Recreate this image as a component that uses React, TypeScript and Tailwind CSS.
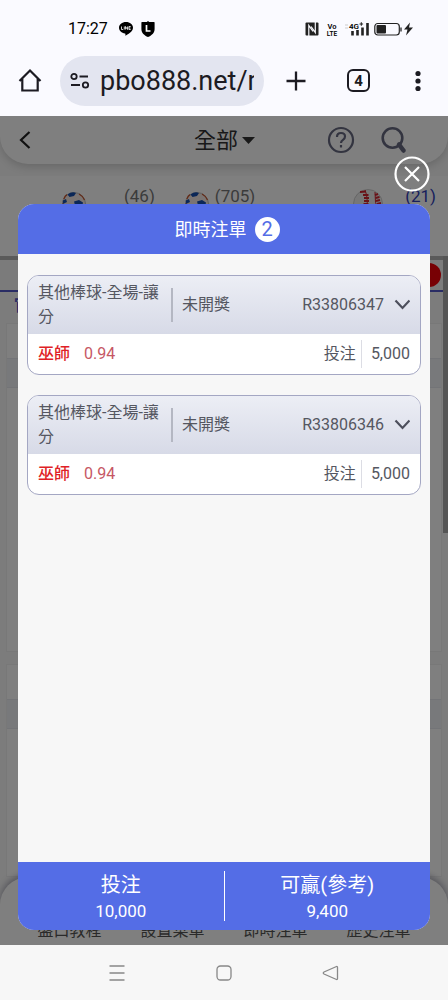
import React from "react";

type Bet = {
  id: string;
  game: string;
  status: string;
  team: string;
  odds: string;
  stake: string;
};

const bets: Bet[] = [
  { id: "R33806347", game: "其他棒球-全場-讓分", status: "未開獎", team: "巫師", odds: "0.94", stake: "5,000" },
  { id: "R33806346", game: "其他棒球-全場-讓分", status: "未開獎", team: "巫師", odds: "0.94", stake: "5,000" },
];

const tabs = ["盤口教程", "設置菜單", "即時注單", "歷史注單"];

const StatusBar: React.FC = () => (
  <div className="flex h-14 items-center justify-between pt-0.5 pl-17 pr-[34px] text-black">
    <div className="flex items-center">
      <span className="w-12 text-base leading-5">17:27</span>
      <svg className="ml-0.5 h-4 w-4" viewBox="0 0 16 16">
        <path d="M8 1C4 1 1 3.500 1 6.800c0 3 2.600 5.200 6 5.700.600.200.500.900.300 2.300 2.300-1.300 7.700-4 7.700-8C15 3.500 12 1 8 1z" />
        <path d="M3.500 5.500v3h1.700M6.300 5.500v3M7.500 8.500v-3l2 3v-3M12.700 5.500h-1.800v3h1.800M11 7h1.500" fill="none" stroke="white" strokeWidth="0.8" />
      </svg>
      <svg className="ml-1.5 h-4 w-4" viewBox="0 0 16 16">
        <path d="M8 0l1.200 1H14q.600 0 .600.600V8c0 4-3 6.500-6.600 8-3.600-1.500-6.600-4-6.600-8V1.600q0-.600.600-.600h4.800z" />
        <path d="M6.500 4v6h4" fill="none" stroke="white" strokeWidth="1.700" />
      </svg>
    </div>
    <div className="flex items-center">
      <svg className="h-3.5 w-3.5" viewBox="0 0 14 14">
        <rect x="0.500" y="0.500" width="13" height="13" rx="1" fill="#222" />
        <path d="M3.800 14V3.500l4.200 6M10.300 0v10.500l-4.200-6" fill="none" stroke="#fafaff" strokeWidth="1.200" />
      </svg>
      <svg className="ml-[7px] h-4 w-3" viewBox="0 0 12 16">
        <text x="6" y="7.500" textAnchor="middle" fontSize="7.500" fontWeight="600" fontFamily="Roboto">Vo</text>
        <text x="6" y="14.500" textAnchor="middle" fontSize="6.500" fontWeight="600" fontFamily="Roboto">LTE</text>
      </svg>
      <svg className="ml-1.5 h-4 w-7" viewBox="0 0 28 16">
        <path d="M1 4h3M1 7h3" stroke="#ccc" />
        <text x="5" y="7.500" fontSize="8" fontWeight="600" fontFamily="Roboto">4G</text>
        <path d="M15.500 3h3.600M17.300 1.200v3.600" stroke="#222" strokeWidth="1" />
        <path d="M8.500 14.500V10M13.500 14.500V9M18.500 14.500V6.500M23.500 14.500V2" stroke="#222" strokeWidth="2.600" />
      </svg>
      <svg className="ml-0.5 h-4 w-10" viewBox="0 0 40 16">
        <rect x="0.800" y="2.500" width="24.500" height="11.500" rx="3" fill="none" stroke="#222" strokeWidth="1.200" />
        <rect x="2.500" y="4" width="9.500" height="8.500" rx="1" fill="#222" />
        <path d="M27 6.500v4" stroke="#222" strokeWidth="1.300" />
        <path d="M36 1.500l-6 7h3.500L32 14.500l7-8h-4z" fill="#222" />
      </svg>
    </div>
  </div>
);

const BrowserBar: React.FC = () => (
  <div className="flex h-[60px] items-start px-4 text-[#1c1b22]">
    <button aria-label="Home" className="mt-2.5 mr-4 h-7 w-7">
      <svg viewBox="0 0 28 28" fill="none" stroke="currentColor" strokeWidth="2.200">
        <path d="M3.500 15L14 4.500 24.500 15M6.300 12.500v12h15.400v-12" />
      </svg>
    </button>
    <div className="flex h-[50px] min-w-0 flex-1 items-center rounded-full bg-[#e3e5f0] px-2.5">
      <svg className="h-5 w-5 shrink-0" viewBox="0 0 20 20" fill="none" stroke="currentColor" strokeWidth="1.800">
        <circle cx="4" cy="5.500" r="2.700" />
        <path d="M9.500 5.500h8.500M1 14H10" />
        <circle cx="15.500" cy="14" r="2.700" />
      </svg>
      <input
        aria-label="Address"
        readOnly
        value="pbo888.net/mobile"
        className="ml-2.5 min-w-0 flex-1 bg-transparent text-[27px] leading-8 outline-none"
      />
    </div>
    <button aria-label="New tab" className="mt-[13px] ml-5 h-6 w-6">
      <svg viewBox="0 0 24 24" stroke="currentColor" strokeWidth="2.300">
        <path d="M12 2.500v19M2.500 12h19" />
      </svg>
    </button>
    <button aria-label="Tabs" className="mt-[13px] ml-[39px] h-[23px] w-[23px] rounded-md border-2 border-current text-[15px] leading-4 font-bold">
      4
    </button>
    <button aria-label="More" className="mt-[13px] mr-0.5 ml-9 h-6 w-6">
      <svg viewBox="0 0 24 24" fill="currentColor">
        <circle cx="12" cy="4.500" r="2.600" />
        <circle cx="12" cy="12" r="2.600" />
        <circle cx="12" cy="19.500" r="2.600" />
      </svg>
    </button>
  </div>
);

const SoccerBall: React.FC = () => (
  <svg className="h-6 w-6" viewBox="0 0 24 24">
    <circle cx="12" cy="12" r="11.500" fill="#f5e9e4" stroke="#bbb" />
    <path d="M5.500 2.500Q10-1 14 1L12 4 7.500 5zM12 9.500l5-1.500 4 2.500-1 5-6 1.500zM.800 8.500L4 7l1 3-4 2z" fill="#174fae" />
    <path d="M1.800 7Q3 3.800 5 2.600M17 2q4 2 5.500 6M.600 11.500l1.500 3" fill="none" stroke="#c4552e" strokeWidth="1.300" />
  </svg>
);

const Baseball: React.FC = () => (
  <svg className="h-[30px] w-[30px]" viewBox="0 0 30 30">
    <circle cx="15" cy="15" r="14.500" fill="#eee" stroke="#ccc" />
    <path d="M12 1q4 9 1 26M22 3q-1 10 4 21" fill="none" stroke="#d3222f" strokeWidth="1" />
    <path d="M7 3l6-.500M10 6h5.500M11 9h5M11 12h5M10.500 15h5M22 6l3-1M22.500 9l4-1M23 12l4-1M24 15l4-1" stroke="#d3222f" strokeWidth="1.900" />
  </svg>
);

const OddsBlock: React.FC<{ className: string }> = ({ className }) => (
  <div className={`mx-1.5 border border-[#f0f0f0] bg-white ${className}`}>
    <div className="h-[34px]" />
    <div className="h-[30px] border-y border-[#e6e8ee] bg-[#f0f2f6]" />
  </div>
);

const SportsPage: React.FC = () => (
  <div className="flex h-full flex-col bg-[#f8f8f8] text-[#333]">
    <div className="flex h-12 shrink-0 items-center rounded-b-[28px] bg-white px-3.5 shadow-[0_3px_8px_rgba(0,0,0,0.16)]">
      <button aria-label="Back" className="h-5 w-5">
        <svg viewBox="0 0 20 20" fill="none" stroke="#222" strokeWidth="2.200">
          <path d="M15.500 2L7 10l8.500 8" />
        </svg>
      </button>
      <div className="flex-1" />
      <button className="mr-[71px] flex items-center gap-1 pt-0.5 text-[22px] leading-6">
        全部
        <svg className="h-2 w-3.5" viewBox="0 0 14 8" fill="#333">
          <path d="M0 0h13L6.500 7z" />
        </svg>
      </button>
      <div className="flex items-center gap-6 pr-[27px] text-[#666980]">
        <button aria-label="Help" className="h-7 w-7">
          <svg viewBox="0 0 28 28" fill="none" stroke="currentColor" strokeWidth="2.200">
            <circle cx="14" cy="14" r="12" />
            <path d="M10 11q0-4 4-4t4 3.500q0 2-2 3.300t-2 3.200" />
            <path d="M14 19v2.500" />
          </svg>
        </button>
        <button aria-label="Search" className="h-7 w-7">
          <svg viewBox="0 0 28 28" fill="none" stroke="currentColor" strokeWidth="2.600">
            <circle cx="13.500" cy="12" r="9.800" />
            <path d="M20 18.500l4.500 6" strokeWidth="4.500" strokeLinecap="round" />
          </svg>
        </button>
      </div>
    </div>
    <div className="mt-3 flex h-20 shrink-0 items-start bg-white pt-2.5 pl-[62px] pr-3 text-[17px] leading-5 text-[#777]">
      <div className="mt-1.5"><SoccerBall /></div>
      <span className="ml-[38px]">(46)</span>
      <div className="mt-1.5 ml-[30px]"><SoccerBall /></div>
      <span className="ml-1.5">(705)</span>
      <div className="mt-[3px] ml-auto"><Baseball /></div>
      <span className="ml-[22px] text-[#303cb8]">(21)</span>
    </div>
    <div className="flex h-9 shrink-0 items-center justify-end border-t-4 border-b-2 border-t-[#b5b5b5] border-b-[#5258c8] bg-[#f6f6f6] pr-[7px]">
      <div className="h-6 w-6 rounded-full bg-[#f00008]" />
    </div>
    <div className="h-[31px] shrink-0 pl-3.5 text-base leading-7 font-bold text-[#5258c8]">官</div>
    <OddsBlock className="h-[329px] shrink-0" />
    <OddsBlock className="mt-3 min-h-0 flex-1" />
    <div className="flex h-[68px] shrink-0 items-end justify-around rounded-t-[28px] bg-white px-[18px] pb-0.5 shadow-[0_-3px_6px_rgba(60,60,90,0.4)]">
      {tabs.map((tab) => (
        <button key={tab} className="text-base leading-6 text-[#555]">
          {tab}
        </button>
      ))}
    </div>
  </div>
);

const BetCard: React.FC<{ bet: Bet }> = ({ bet }) => (
  <div className="overflow-hidden rounded-xl border border-[#a4a7c3] bg-white text-base text-[#555761]">
    <div className="flex h-[58px] items-center bg-linear-to-b from-[#eceef5] to-[#d7dae7] px-2.5">
      <div className="w-[133px] leading-6">
        <div className="w-[124px]">{bet.game}</div>
      </div>
      <div className="h-[34px] w-0.5 bg-[#b4b7c2]" />
      <span className="ml-[9px]">{bet.status}</span>
      <span className="ml-auto">{bet.id}</span>
      <button aria-label="Expand" className="ml-2.5 h-4 w-4">
        <svg viewBox="0 0 16 16" fill="none" stroke="#4d4f5c" strokeWidth="2.200">
          <path d="M1.500 3.500l7 7.500 7-7.500" />
        </svg>
      </button>
    </div>
    <div className="flex h-10 items-center px-2.5">
      <span className="font-medium text-[#e01f26]">{bet.team}</span>
      <span className="ml-3.5 text-[#c65764]">{bet.odds}</span>
      <span className="ml-auto">投注</span>
      <div className="mx-[5px] h-7 w-px bg-[#dcdde4]" />
      <span className="ml-1">{bet.stake}</span>
    </div>
  </div>
);

const BetSlip: React.FC = () => (
  <div role="dialog" aria-label="即時注單" className="relative flex h-full flex-col rounded-2xl bg-[#f7f7f7]">
    <button aria-label="Close" className="absolute -top-12 right-0 h-9 w-9 text-white">
      <svg viewBox="0 0 36 36" fill="none" stroke="currentColor" strokeWidth="2.200">
        <circle cx="18" cy="18" r="16.500" />
        <path d="M11 11l14 14M25 11L11 25" />
      </svg>
    </button>
    <div className="flex h-[50px] shrink-0 items-center justify-center gap-2 rounded-t-2xl bg-[#546de6] pl-1.5 text-white">
      <span className="pt-0.5 text-lg">即時注單</span>
      <span className="flex h-[25px] w-[25px] items-center justify-center rounded-full bg-white text-xl text-[#546de6]">
        {bets.length}
      </span>
    </div>
    <div className="flex flex-1 flex-col gap-5 px-[9px] pt-[21px]">
      {bets.map((bet) => (
        <BetCard key={bet.id} bet={bet} />
      ))}
    </div>
    <div className="flex h-[68px] shrink-0 items-center rounded-b-2xl bg-[#546de6] text-center text-white">
      <div className="flex-1 pt-0.5">
        <div className="text-xl leading-7">投注</div>
        <div className="text-[17px] leading-6">10,000</div>
      </div>
      <div className="h-[50px] w-px bg-white" />
      <div className="flex-1 pt-0.5">
        <div className="text-xl leading-7">可贏(參考)</div>
        <div className="text-[17px] leading-6">9,400</div>
      </div>
    </div>
  </div>
);

const App: React.FC = () => {
  return (
    <div className="flex min-h-screen flex-col bg-[#fafaff] font-[Roboto,'Noto_Sans_CJK_TC',sans-serif]">
      <StatusBar />
      <BrowserBar />
      <main className="relative flex flex-1 flex-col">
        <div className="relative flex-1">
          <div className="absolute inset-0 overflow-hidden">
            <SportsPage />
          </div>
          <div className="absolute top-[140px] right-0 h-[277px] w-[5px] bg-[#aaa]" />
        </div>
        <div className="absolute inset-0 bg-black/50 px-[18px] pt-[88px] pb-[15px]">
          <BetSlip />
        </div>
      </main>
      <nav className="flex h-[55px] items-center justify-center gap-[83px] bg-[#f7f7f7] text-[#888]">
        <button aria-label="Recents" className="h-6 w-6">
          <svg viewBox="0 0 24 24" stroke="currentColor" strokeWidth="1.300">
            <path d="M4.500 5h15M4.500 12h15M4.500 19h15" />
          </svg>
        </button>
        <button aria-label="Home screen" className="h-6 w-6">
          <svg viewBox="0 0 24 24" fill="none" stroke="currentColor" strokeWidth="1.300">
            <rect x="5" y="5" width="14" height="14" rx="3.500" />
          </svg>
        </button>
        <button aria-label="Back" className="h-6 w-6">
          <svg viewBox="0 0 24 24" fill="none" stroke="currentColor" strokeWidth="1.300">
            <path d="M17.500 5.500L5 11q-1.500 1 0 2l12.500 5.500q1 .300 1-1v-11q0-1.300-1-1z" />
          </svg>
        </button>
      </nav>
    </div>
  );
};

export default App;
